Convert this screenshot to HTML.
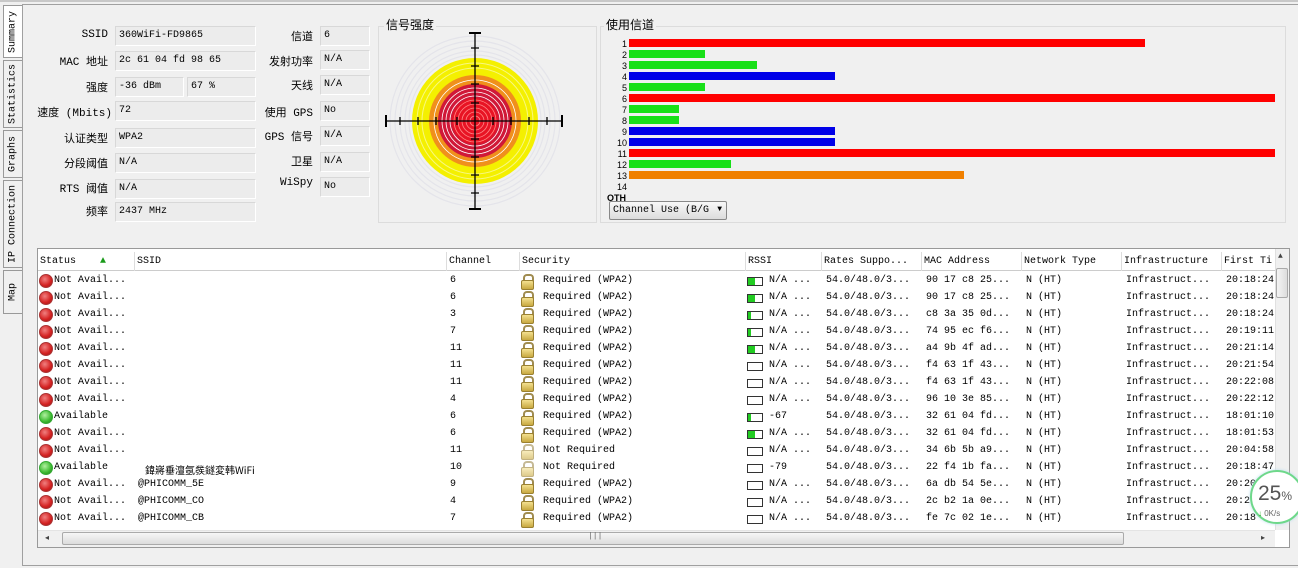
<!DOCTYPE html>
<html><head><meta charset="utf-8"><style>
*{margin:0;padding:0;box-sizing:border-box}
body{width:1298px;height:568px;background:#f0f0f0;position:relative;overflow:hidden;font-family:"Liberation Mono","Noto Sans CJK SC",monospace;font-size:10px;color:#000}
.a{position:absolute}
.lbl{position:absolute;text-align:right;font-family:"Liberation Mono","Noto Sans CJK SC",monospace;font-size:11px;white-space:nowrap}
.box{position:absolute;height:20px;border:1px solid #d8d8d8;border-bottom-color:#fff;border-right-color:#fff;background:#ececec;padding:3px 3px;font-size:10px;white-space:nowrap}
.tab{position:absolute;left:3px;width:19px;border:1px solid #999;border-right:none;background:#f0f0f0}
.tab span{position:absolute;left:50%;top:50%;transform:translate(-50%,-50%) rotate(-90deg);white-space:nowrap;font-size:10px}
.row{position:absolute;left:38px;height:17px;width:1237px}
.row span{position:absolute;top:2px;white-space:nowrap}
.c0{left:16px}.c1{left:100px}.c2{left:412px}.c3{left:505px}.c4{left:731px}.c5{left:788px}.c6{left:888px}.c7{left:988px}.c8{left:1088px}.c9{left:1188px}
.dot{position:absolute;left:1px;top:1px;width:14px;height:14px;border-radius:50%;background:radial-gradient(circle at 40% 35%,#f08080,#d42020 60%,#902020);border:1px solid #a33}
.dot.g{background:radial-gradient(circle at 40% 35%,#b0f0a0,#3cba30 60%,#287020);border-color:#3a3}
.lock{position:absolute;left:483px;top:1px;width:11px;height:14px}
.lock:before{content:"";position:absolute;left:2px;top:0;width:7px;height:7px;border:2px solid #a08c50;border-bottom:none;border-radius:4px 4px 0 0}
.lock:after{content:"";position:absolute;left:0;top:6px;width:11px;height:8px;background:linear-gradient(#f4e090,#c8a840);border:1px solid #9a8030;border-radius:2px}
.rs{position:absolute;left:709px;top:4px;width:16px;height:9px;border:1px solid #333;background:#fff}
.rs i{position:absolute;left:0;top:0;bottom:0;background:#22cc22}
.th{position:absolute;top:252px;height:19px;border-right:1px solid #ddd;padding:4px 2px;font-size:10px;white-space:nowrap}
</style></head><body>
<div class="a" style="left:0;top:0;width:1298px;height:2px;background:#c8c8c8"></div>
<div class="a" style="left:22px;top:4px;width:1276px;height:562px;border:1px solid #a0a0a0;border-right:none"></div>
<div class="tab" style="top:5px;height:53px;background:#fff"><span>Summary</span></div>
<div class="tab" style="top:60px;height:68px"><span>Statistics</span></div>
<div class="tab" style="top:130px;height:48px"><span>Graphs</span></div>
<div class="tab" style="top:180px;height:88px"><span>IP Connection</span></div>
<div class="tab" style="top:270px;height:44px"><span>Map</span></div>

<div class="lbl" style="right:1190px;top:29px">SSID</div><div class="box" style="left:115px;top:26px;width:141px">360WiFi-FD9865</div>
<div class="lbl" style="right:1190px;top:53px">MAC 地址</div><div class="box" style="left:115px;top:51px;width:141px">2c 61 04 fd 98 65</div>
<div class="lbl" style="right:1190px;top:79px">强度</div><div class="box" style="left:115px;top:77px;width:69px">-36 dBm</div><div class="box" style="left:187px;top:77px;width:69px">67 %</div>
<div class="lbl" style="right:1186px;top:104px">速度 (Mbits)</div><div class="box" style="left:115px;top:101px;width:141px">72</div>
<div class="lbl" style="right:1190px;top:130px">认证类型</div><div class="box" style="left:115px;top:128px;width:141px">WPA2</div>
<div class="lbl" style="right:1190px;top:155px">分段阈值</div><div class="box" style="left:115px;top:153px;width:141px">N/A</div>
<div class="lbl" style="right:1190px;top:180px">RTS 阈值</div><div class="box" style="left:115px;top:179px;width:141px">N/A</div>
<div class="lbl" style="right:1190px;top:203px">频率</div><div class="box" style="left:115px;top:202px;width:141px">2437 MHz</div>

<div class="lbl" style="right:985px;top:28px">信道</div><div class="box" style="left:320px;top:26px;width:50px">6</div>
<div class="lbl" style="right:985px;top:53px">发射功率</div><div class="box" style="left:320px;top:50px;width:50px">N/A</div>
<div class="lbl" style="right:985px;top:77px">天线</div><div class="box" style="left:320px;top:75px;width:50px">N/A</div>
<div class="lbl" style="right:985px;top:104px">使用 GPS</div><div class="box" style="left:320px;top:101px;width:50px">No</div>
<div class="lbl" style="right:985px;top:128px">GPS 信号</div><div class="box" style="left:320px;top:126px;width:50px">N/A</div>
<div class="lbl" style="right:985px;top:153px">卫星</div><div class="box" style="left:320px;top:152px;width:50px">N/A</div>
<div class="lbl" style="right:985px;top:177px">WiSpy</div><div class="box" style="left:320px;top:177px;width:50px">No</div>

<div class="a" style="left:378px;top:26px;width:219px;height:197px;border:1px solid #dcdcdc"></div>
<div class="a" style="left:384px;top:16px;background:#f0f0f0;padding:0 2px;font-size:12px;font-family:'Noto Sans CJK SC',sans-serif">信号强度</div>
<svg class="a" style="left:378px;top:26px" width="219" height="197" viewBox="378 26 219 197">
<g fill="none" stroke="#e4e4ea" stroke-width="1.2"><circle cx="475" cy="121" r="85"/><circle cx="475" cy="121" r="80"/><circle cx="475" cy="121" r="75"/><circle cx="475" cy="121" r="70"/><circle cx="475" cy="121" r="66"/></g>
<circle cx="475" cy="121" r="63" fill="#f4f000"/>
<g fill="none" stroke="#f8f880" stroke-width="1"><circle cx="475" cy="121" r="58"/><circle cx="475" cy="121" r="53"/></g>
<circle cx="475" cy="121" r="46" fill="#f0901c"/>
<circle cx="475" cy="121" r="37" fill="#d01838"/>
<g fill="none" stroke="#fff" stroke-width="0.8"><circle cx="475" cy="121" r="41"/><circle cx="475" cy="121" r="33"/><circle cx="475" cy="121" r="29"/><circle cx="475" cy="121" r="25"/><circle cx="475" cy="121" r="21"/><circle cx="475" cy="121" r="17"/><circle cx="475" cy="121" r="13"/><circle cx="475" cy="121" r="9"/><circle cx="475" cy="121" r="5"/></g>
<circle cx="475" cy="121" r="23" fill="#ff1010" opacity=".5"/>
<g stroke="#000" stroke-width="1.3"><line x1="386" y1="121" x2="562" y2="121"/><line x1="475" y1="33" x2="475" y2="209"/>
<line x1="386" y1="115" x2="386" y2="127" stroke-width="2"/><line x1="562" y1="115" x2="562" y2="127" stroke-width="2"/><line x1="469" y1="33" x2="481" y2="33" stroke-width="2"/><line x1="469" y1="209" x2="481" y2="209" stroke-width="2"/>
<path d="M400 117v8M418 117v8M436 117v8M457 117v8M493 117v8M511 117v8M529 117v8M547 117v8M471 48h8M471 66h8M471 84h8M471 103h8M471 139h8M471 157h8M471 175h8M471 193h8"/></g>
</svg>

<div class="a" style="left:600px;top:26px;width:686px;height:197px;border:1px solid #dcdcdc"></div>
<div class="a" style="left:604px;top:16px;background:#f0f0f0;padding:0 2px;font-size:12px;font-family:'Noto Sans CJK SC',sans-serif">使用信道</div>
<svg class="a" style="left:600px;top:26px" width="686" height="197" viewBox="600 26 686 197" font-family="Liberation Sans" font-size="9">
<g text-anchor="end">
<text x="627" y="47">1</text><text x="627" y="58">2</text><text x="627" y="69">3</text><text x="627" y="80">4</text><text x="627" y="91">5</text><text x="627" y="102">6</text><text x="627" y="113">7</text><text x="627" y="124">8</text><text x="627" y="135">9</text><text x="627" y="146">10</text><text x="627" y="157">11</text><text x="627" y="168">12</text><text x="627" y="179">13</text><text x="627" y="190">14</text></g>
<g>
<rect x="629" y="39" width="516" height="8" fill="#f00"/><rect x="629" y="50" width="76" height="8" fill="#18e018"/><rect x="629" y="61" width="128" height="8" fill="#18e018"/><rect x="629" y="72" width="206" height="8" fill="#0000e8"/><rect x="629" y="83" width="76" height="8" fill="#18e018"/><rect x="629" y="94" width="646" height="8" fill="#f00"/><rect x="629" y="105" width="50" height="8" fill="#18e018"/><rect x="629" y="116" width="50" height="8" fill="#18e018"/><rect x="629" y="127" width="206" height="8" fill="#0000e8"/><rect x="629" y="138" width="206" height="8" fill="#0000e8"/><rect x="629" y="149" width="646" height="8" fill="#f00"/><rect x="629" y="160" width="102" height="8" fill="#18e018"/><rect x="629" y="171" width="335" height="8" fill="#f08000"/></g>
<text x="607" y="201" font-weight="bold" font-size="9">OTH</text>
</svg>
<div class="a" style="left:609px;top:201px;width:118px;height:19px;border:1px solid #888;border-radius:2px;background:linear-gradient(#f8f8f8,#dcdcdc);padding:3px 3px;font-size:10px">Channel Use (B/G <span style="position:absolute;right:4px;top:3px;font-size:8px">▼</span></div>

<div class="a" style="left:37px;top:248px;width:1253px;height:300px;border:1px solid #999;background:#fff"></div>
<div class="a" style="left:38px;top:252px;width:1237px;height:19px;border-bottom:1px solid #ccc"></div>
<div class="th" style="left:38px;width:97px">Status <span style="color:#1a9a1a;margin-left:18px">▲</span></div>
<div class="th" style="left:135px;width:312px">SSID</div>
<div class="th" style="left:447px;width:73px">Channel</div>
<div class="th" style="left:520px;width:226px">Security</div>
<div class="th" style="left:746px;width:76px">RSSI</div>
<div class="th" style="left:822px;width:100px">Rates Suppo...</div>
<div class="th" style="left:922px;width:100px">MAC Address</div>
<div class="th" style="left:1022px;width:100px">Network Type</div>
<div class="th" style="left:1122px;width:100px">Infrastructure</div>
<div class="th" style="left:1222px;width:53px;border:none">First Ti</div>

<div class="row" style="top:273px"><i class="dot"></i><span class="c0">Not Avail...</span><span class="c2">6</span><i class="lock"></i><span class="c3">Required (WPA2)</span><i class="rs"><i style="width:7px"></i></i><span class="c4">N/A ...</span><span class="c5">54.0/48.0/3...</span><span class="c6">90 17 c8 25...</span><span class="c7">N (HT)</span><span class="c8">Infrastruct...</span><span class="c9">20:18:24</span></div>
<div class="row" style="top:290px"><i class="dot"></i><span class="c0">Not Avail...</span><span class="c2">6</span><i class="lock"></i><span class="c3">Required (WPA2)</span><i class="rs"><i style="width:7px"></i></i><span class="c4">N/A ...</span><span class="c5">54.0/48.0/3...</span><span class="c6">90 17 c8 25...</span><span class="c7">N (HT)</span><span class="c8">Infrastruct...</span><span class="c9">20:18:24</span></div>
<div class="row" style="top:307px"><i class="dot"></i><span class="c0">Not Avail...</span><span class="c2">3</span><i class="lock"></i><span class="c3">Required (WPA2)</span><i class="rs"><i style="width:3px"></i></i><span class="c4">N/A ...</span><span class="c5">54.0/48.0/3...</span><span class="c6">c8 3a 35 0d...</span><span class="c7">N (HT)</span><span class="c8">Infrastruct...</span><span class="c9">20:18:24</span></div>
<div class="row" style="top:324px"><i class="dot"></i><span class="c0">Not Avail...</span><span class="c2">7</span><i class="lock"></i><span class="c3">Required (WPA2)</span><i class="rs"><i style="width:3px"></i></i><span class="c4">N/A ...</span><span class="c5">54.0/48.0/3...</span><span class="c6">74 95 ec f6...</span><span class="c7">N (HT)</span><span class="c8">Infrastruct...</span><span class="c9">20:19:11</span></div>
<div class="row" style="top:341px"><i class="dot"></i><span class="c0">Not Avail...</span><span class="c2">11</span><i class="lock"></i><span class="c3">Required (WPA2)</span><i class="rs"><i style="width:7px"></i></i><span class="c4">N/A ...</span><span class="c5">54.0/48.0/3...</span><span class="c6">a4 9b 4f ad...</span><span class="c7">N (HT)</span><span class="c8">Infrastruct...</span><span class="c9">20:21:14</span></div>
<div class="row" style="top:358px"><i class="dot"></i><span class="c0">Not Avail...</span><span class="c2">11</span><i class="lock"></i><span class="c3">Required (WPA2)</span><i class="rs"></i><span class="c4">N/A ...</span><span class="c5">54.0/48.0/3...</span><span class="c6">f4 63 1f 43...</span><span class="c7">N (HT)</span><span class="c8">Infrastruct...</span><span class="c9">20:21:54</span></div>
<div class="row" style="top:375px"><i class="dot"></i><span class="c0">Not Avail...</span><span class="c2">11</span><i class="lock"></i><span class="c3">Required (WPA2)</span><i class="rs"></i><span class="c4">N/A ...</span><span class="c5">54.0/48.0/3...</span><span class="c6">f4 63 1f 43...</span><span class="c7">N (HT)</span><span class="c8">Infrastruct...</span><span class="c9">20:22:08</span></div>
<div class="row" style="top:392px"><i class="dot"></i><span class="c0">Not Avail...</span><span class="c2">4</span><i class="lock"></i><span class="c3">Required (WPA2)</span><i class="rs"></i><span class="c4">N/A ...</span><span class="c5">54.0/48.0/3...</span><span class="c6">96 10 3e 85...</span><span class="c7">N (HT)</span><span class="c8">Infrastruct...</span><span class="c9">20:22:12</span></div>
<div class="row" style="top:409px"><i class="dot g"></i><span class="c0">Available</span><span class="c2">6</span><i class="lock"></i><span class="c3">Required (WPA2)</span><i class="rs"><i style="width:3px"></i></i><span class="c4">-67</span><span class="c5">54.0/48.0/3...</span><span class="c6">32 61 04 fd...</span><span class="c7">N (HT)</span><span class="c8">Infrastruct...</span><span class="c9">18:01:10</span></div>
<div class="row" style="top:426px"><i class="dot"></i><span class="c0">Not Avail...</span><span class="c2">6</span><i class="lock"></i><span class="c3">Required (WPA2)</span><i class="rs"><i style="width:7px"></i></i><span class="c4">N/A ...</span><span class="c5">54.0/48.0/3...</span><span class="c6">32 61 04 fd...</span><span class="c7">N (HT)</span><span class="c8">Infrastruct...</span><span class="c9">18:01:53</span></div>
<div class="row" style="top:443px"><i class="dot"></i><span class="c0">Not Avail...</span><span class="c2">11</span><i class="lock" style="opacity:.6"></i><span class="c3">Not Required</span><i class="rs"></i><span class="c4">N/A ...</span><span class="c5">54.0/48.0/3...</span><span class="c6">34 6b 5b a9...</span><span class="c7">N (HT)</span><span class="c8">Infrastruct...</span><span class="c9">20:04:58</span></div>
<div class="row" style="top:460px"><i class="dot g"></i><span class="c0">Available</span><span class="c1" style="left:107px;font-family:'Noto Sans CJK SC',monospace">鍏嶈垂澶氬彂鐩変韩WiFi</span><span class="c2">10</span><i class="lock" style="opacity:.6"></i><span class="c3">Not Required</span><i class="rs"></i><span class="c4">-79</span><span class="c5">54.0/48.0/3...</span><span class="c6">22 f4 1b fa...</span><span class="c7">N (HT)</span><span class="c8">Infrastruct...</span><span class="c9">20:18:47</span></div>
<div class="row" style="top:477px"><i class="dot"></i><span class="c0">Not Avail...</span><span class="c1">@PHICOMM_5E</span><span class="c2">9</span><i class="lock"></i><span class="c3">Required (WPA2)</span><i class="rs"></i><span class="c4">N/A ...</span><span class="c5">54.0/48.0/3...</span><span class="c6">6a db 54 5e...</span><span class="c7">N (HT)</span><span class="c8">Infrastruct...</span><span class="c9">20:20</span></div>
<div class="row" style="top:494px"><i class="dot"></i><span class="c0">Not Avail...</span><span class="c1">@PHICOMM_CO</span><span class="c2">4</span><i class="lock"></i><span class="c3">Required (WPA2)</span><i class="rs"></i><span class="c4">N/A ...</span><span class="c5">54.0/48.0/3...</span><span class="c6">2c b2 1a 0e...</span><span class="c7">N (HT)</span><span class="c8">Infrastruct...</span><span class="c9">20:2</span></div>
<div class="row" style="top:511px"><i class="dot"></i><span class="c0">Not Avail...</span><span class="c1">@PHICOMM_CB</span><span class="c2">7</span><i class="lock"></i><span class="c3">Required (WPA2)</span><i class="rs"></i><span class="c4">N/A ...</span><span class="c5">54.0/48.0/3...</span><span class="c6">fe 7c 02 1e...</span><span class="c7">N (HT)</span><span class="c8">Infrastruct...</span><span class="c9">20:18</span></div>

<div class="a" style="left:1275px;top:249px;width:14px;height:281px;background:#f0f0f0;border-left:1px solid #e0e0e0"></div>
<div class="a" style="left:1276px;top:268px;width:12px;height:30px;border:1px solid #aaa;border-radius:2px;background:linear-gradient(90deg,#f4f4f4,#ddd)"></div>
<div class="a" style="left:1278px;top:252px;font-size:8px;color:#444">▲</div>
<div class="a" style="left:38px;top:530px;width:1237px;height:17px;background:#f0f0f0;border-top:1px solid #e4e4e4"></div>
<div class="a" style="left:62px;top:532px;width:1062px;height:13px;border:1px solid #aaa;border-radius:2px;background:linear-gradient(#f6f6f6,#dcdcdc)"></div>
<div class="a" style="left:588px;top:532px;font-size:8px;color:#666">|||</div>
<div class="a" style="left:45px;top:533px;font-size:8px;color:#444">◂</div>
<div class="a" style="left:1261px;top:533px;font-size:8px;color:#444">▸</div>

<div class="a" style="left:1250px;top:470px;width:54px;height:54px;border-radius:50%;background:#fff;border:2px solid #6ed88a;box-shadow:0 0 3px #bde"></div>
<div class="a" style="left:1258px;top:482px;font-family:'Liberation Sans',sans-serif;font-size:21px;color:#555">25<span style="font-size:12px">%</span></div>
<div class="a" style="left:1258px;top:509px;font-family:'Liberation Sans',sans-serif;font-size:8px;color:#666"><span style="color:#2a2">↓</span> 0K/s</div>
</body></html>
